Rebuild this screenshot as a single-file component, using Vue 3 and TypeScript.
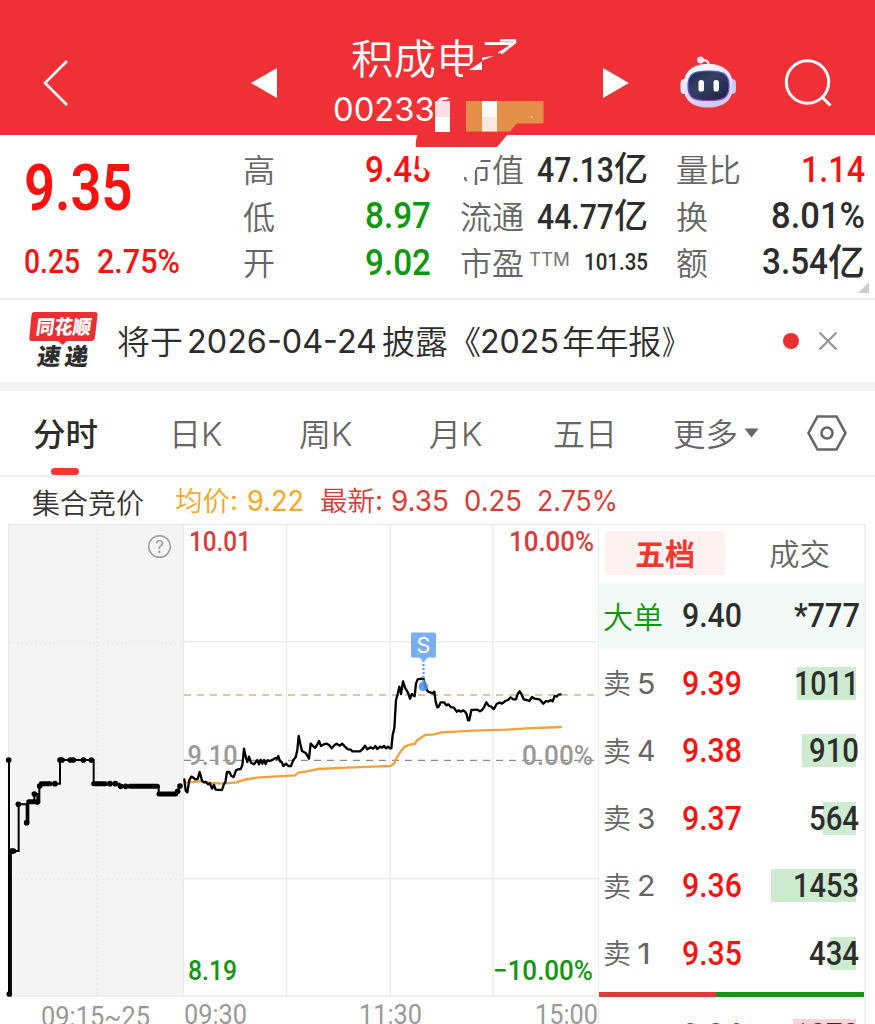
<script setup lang="ts">
import { h, type FunctionalComponent } from 'vue'

interface FitProps {
  t: string
  w: number
  s: number
  k?: 'num' | 'ui' | 'cjk'
  dy?: number
}

// One line of text set to an exact advance width.
const Fit: FunctionalComponent<FitProps> = (p) => {
  const kind = p.k ?? 'num'
  const base = kind === 'cjk' ? 0.885 : 0.86
  return h('svg', { class: ['fit', kind], width: p.w, height: p.s }, [
    h(
      'text',
      {
        x: 0,
        y: p.s * base + (p.dy ?? 0),
        'font-size': p.s,
        textLength: p.w,
        lengthAdjust: 'spacingAndGlyphs',
        fill: 'currentColor',
      },
      p.t,
    ),
  ])
}
Fit.props = ['t', 'w', 's', 'k', 'dy']

const highLow = [
  { label: '高', value: '9.45', cls: 'up' },
  { label: '低', value: '8.97', cls: 'down' },
  { label: '开', value: '9.02', cls: 'down' },
]

const tabs = ['日', '周', '月']

const asks = [
  { n: '5', price: '9.39', vol: '1011', w: 65, bar: 59 },
  { n: '4', price: '9.38', vol: '910', w: 50, bar: 54 },
  { n: '3', price: '9.37', vol: '564', w: 50, bar: 33 },
  { n: '2', price: '9.36', vol: '1453', w: 66, bar: 85 },
  { n: '1', price: '9.35', vol: '434', w: 50, bar: 26 },
]

const priceLine =
  '13,478 17,512 22,517 28,480 34,470 40,473 46,478 53,477 59,456 66,482 72,487 78,486 84,493 90,490 96,506 102,495 107,509 126,510 132,492 136,487 141,456 148,456 154,468 161,471 168,451 174,448 182,447 187,436 192,386 198,414 202,426 207,410 213,428 222,433 232,420 237,433 242,419 247,431 252,420 257,432 262,421 270,423 280,418 287,414 291,416 295,408 300,424 305,426 310,438 318,431 325,438 333,438 340,420 347,412 352,390 356,348 361,372 366,393 378,400 387,416 392,371 399,378 405,384 411,375 417,363 423,378 432,373 440,371 448,376 455,385 464,375 470,371 478,377 487,371 494,379 504,388 512,389 517,394 540,394 548,387 555,377 562,388 572,382 580,386 586,378 592,387 600,380 606,383 612,378 618,385 624,380 630,385 634,385 638,345 643,325 648,240 653,222 658,200 663,222 669,184 675,203 681,213 686,223 690,236 696,222 704,229 708,190 713,178 730,175 736,200 743,214 758,220 763,215 767,245 772,262 776,260 782,247 792,247 799,256 805,253 813,262 821,262 830,275 836,271 842,275 850,271 856,276 860,283 864,301 868,301 874,270 892,269 900,274 906,270 912,262 919,247 927,258 934,260 941,268 950,252 958,248 966,251 976,243 984,240 992,232 1000,238 1008,238 1013,222 1019,214 1025,224 1031,238 1040,240 1048,243 1056,231 1064,236 1078,238 1090,251 1098,243 1105,245 1112,240 1118,244 1124,228 1130,230 1136,224 1142,223'

const averageLine =
  '13,488 60,484 90,489 130,491 170,487 190,480 230,473 290,469 345,466 355,458 380,454 415,447 500,443 600,439 630,438 642,431 652,410 662,395 675,379 690,374 704,372 712,360 722,354 735,345 760,343 785,337 880,332 980,329 1040,325 1143,321'

const auctionDots = [
  [26, 720], [38, 993], [55, 853], [80, 908], [103, 822], [112, 846], [119, 798], [165, 791],
  [180, 720], [186, 720], [211, 720], [220, 720], [250, 720], [274, 720], [330, 791], [346, 791],
  [362, 799], [377, 799], [533, 814], [540, 798], [28, 1422],
]
</script>

<template>
  <div class="page">
    <header class="head">
      <svg class="back" width="30" height="50" viewBox="0 0 30 50">
        <path d="M26 3 4 25 26 47" />
      </svg>
      <svg class="prev" width="26" height="30" viewBox="0 0 26 30"><path d="M0 15 26 0V30Z" /></svg>
      <div class="name">
        <Fit t="积成电子" :w="170" :s="41" k="cjk" />
        <Fit class="code" t="002339" :w="122" :s="32.5" k="ui" />
      </div>
      <svg class="next" width="26" height="30" viewBox="0 0 26 30"><path d="M26 15 0 0V30Z" /></svg>
      <svg class="robot" width="58" height="54" viewBox="0 0 58 54">
        <defs>
          <linearGradient id="shell" x1="0" y1="0" x2="0.4" y2="1">
            <stop offset="0" stop-color="#fff" />
            <stop offset="1" stop-color="#cfcdf2" />
          </linearGradient>
          <linearGradient id="visor" x1="0" y1="0" x2="1" y2="1">
            <stop offset="0" stop-color="#1e2848" />
            <stop offset="0.4" stop-color="#354264" />
            <stop offset="1" stop-color="#18203f" />
          </linearGradient>
          <linearGradient id="rim" x1="0" y1="0" x2="0.5" y2="1">
            <stop offset="0" stop-color="#2f6fb0" />
            <stop offset="0.5" stop-color="#6b46d8" />
            <stop offset="1" stop-color="#8d35e5" />
          </linearGradient>
        </defs>
        <path d="M22 6C27 4 30 6 30 12" fill="none" stroke="#ecdcf0" stroke-width="2.4" />
        <circle cx="21.500" cy="5" r="3.400" fill="#f3e3f3" />
        <rect x="1.500" y="24" width="8" height="15" rx="4" fill="#e9e7fa" />
        <rect x="49" y="24" width="8" height="15" rx="4" fill="#c9c5ee" />
        <path d="M29 9C45 9 54 17 54 31S45 52.500 29 52.500 4.500 45 4.500 31 13 9 29 9Z" fill="url(#shell)" />
        <path d="M29.500 16C43 16 50 18 50 31S43 45.500 29.500 45.500 9 44 9 31 16 16 29.500 16Z" fill="url(#visor)" stroke="url(#rim)" stroke-width="1.200" />
        <rect x="19.500" y="25" width="5.500" height="11.500" rx="2.600" fill="#fff" />
        <rect x="34.500" y="25" width="5.500" height="11.500" rx="2.600" fill="#fff" />
      </svg>
      <svg class="search" width="50" height="50" viewBox="0 0 50 50">
        <circle cx="23.500" cy="23" r="21.200" />
        <path d="M38 38 46.500 46.500" />
      </svg>
      <svg class="smudge" width="240" height="160" viewBox="320 20 240 160">
        <path d="M463 74 467 69 473 61 485 54 499 53.500 517 42 530 48V86H463Z" fill="#ef3137" />
        <path d="M434 111C436 105 440 102 446 100L460 94V126H437Z" fill="#ef3137" />
        <path d="M418 134H508L497 147H416Q415 140 418 134Z" fill="#ef3137" />
        <path d="M469 70 482 61.500V70ZM482 57.500 494 56 482 60.500Z" fill="#fff" />
        <path d="M500 40.500H515V42.500L501 53.500" fill="none" stroke="#fff" stroke-width="2.400" />
        <path d="M435 101H450V117H435Z" fill="#fbdfe4" />
        <path d="M435 117H450V132H435Z" fill="#fff" />
        <path d="M466 101H543.500V123.500H517L510 131.500H466Z" fill="#e38f49" />
        <path d="M482 101H497V117H482Z" fill="#fffafa" />
        <path d="M482 117H497V131.500H482Z" fill="#f8e8dd" />
        <circle cx="531.500" cy="117" r="1" fill="#f5c9a0" />
        <path d="M418.500 150H433V169L429 172 425 168 420 169.500 418.500 166Z" fill="#fff" />
        <path d="M458 150H491V158.500H482L475 170.500V187H458Z" fill="#fff" />
        <rect x="464" y="177" width="2.500" height="3" fill="#777" />
      </svg>
    </header>

    <section class="quote">
      <div class="last up">
        <Fit t="9.35" :w="108.5" :s="64.5" />
        <div class="delta">
          <Fit t="0.25" :w="56" :s="32.5" />
          <Fit t="2.75%" :w="83" :s="32.5" />
        </div>
      </div>
      <div class="col">
        <div v-for="r in highLow" :key="r.label" class="row">
          <Fit class="lab" :t="r.label" :w="32" :s="32" k="cjk" :dy="2" />
          <Fit :class="r.cls" :t="r.value" :w="66" :s="37.5" />
        </div>
      </div>
      <div class="col mid">
        <div class="row">
          <Fit class="lab" t="市值" :w="64" :s="32" k="cjk" :dy="2" />
          <span class="pair"><Fit t="47.13" :w="77" :s="34.5" :dy="1.5" /><Fit class="yi" t="亿" :w="34" :s="34" k="cjk" /></span>
        </div>
        <div class="row">
          <Fit class="lab" t="流通" :w="64" :s="32" k="cjk" :dy="2" />
          <span class="pair"><Fit t="44.77" :w="77" :s="34.5" :dy="1.5" /><Fit class="yi" t="亿" :w="34" :s="34" k="cjk" /></span>
        </div>
        <div class="row">
          <Fit class="lab" t="市盈" :w="64" :s="32" k="cjk" :dy="2" />
          <Fit class="ttm" t="TTM" :w="41" :s="18.5" k="ui" :dy="-1.500" />
          <Fit class="pe" t="101.35" :w="64" :s="23" />
        </div>
      </div>
      <div class="col right">
        <div class="row">
          <Fit class="lab" t="量比" :w="65" :s="32" k="cjk" :dy="2" />
          <Fit class="up" t="1.14" :w="64" :s="37.5" />
        </div>
        <div class="row">
          <Fit class="lab" t="换" :w="32" :s="32" k="cjk" :dy="2" />
          <Fit t="8.01%" :w="94" :s="37" />
        </div>
        <div class="row">
          <Fit class="lab" t="额" :w="32" :s="32" k="cjk" :dy="2" />
          <span class="pair"><Fit t="3.54" :w="66" :s="36" /><Fit class="yi" t="亿" :w="37" :s="37" k="cjk" /></span>
        </div>
      </div>
      <svg class="corner" width="11" height="11" viewBox="0 0 11 11"><path d="M11 0V11H0Z" /></svg>
    </section>

    <section class="notice">
      <svg class="logo" width="70" height="60" viewBox="0 0 70 60">
        <path d="M5 1H66Q69 1 68.500 4L66 26Q65.500 30 62 30H38L33.500 34 29 30H2.500Q0 30 0.300 27L2.500 4Q3 1 5 1Z" fill="#ea2f33" />
        <g transform="skewX(-8)">
          <text x="9.500" y="23" font-size="19.500" textLength="55" lengthAdjust="spacingAndGlyphs" fill="#fff">同花顺</text>
          <text x="15" y="54.500" font-size="23.500" textLength="51" lengthAdjust="spacing" fill="#2d2d2d">速递</text>
        </g>
      </svg>
      <Fit class="n1" t="将于" :w="66" :s="32.5" k="cjk" />
      <Fit class="n2" t="2026-04-24" :w="190" :s="32.5" k="ui" />
      <Fit class="n3" t="披露《" :w="99" :s="32.5" k="cjk" />
      <Fit class="n4" t="2025" :w="79" :s="32.5" k="ui" />
      <Fit class="n5" t="年年报" :w="99.5" :s="32.5" k="cjk" />
      <Fit t="》" :w="26" :s="32.5" k="cjk" />
      <i class="dot"></i>
      <svg class="close" width="20" height="20" viewBox="0 0 20 20"><path d="M1.500 1.500 18.500 18.500M18.500 1.500 1.500 18.500" /></svg>
    </section>

    <nav class="tabs">
      <div class="tab on"><Fit t="分时" :w="65" :s="32" k="cjk" :dy="1" /></div>
      <div v-for="t in tabs" :key="t" class="tab tk">
        <Fit :t="t" :w="32" :s="32" k="cjk" :dy="1" />
        <Fit t="K" :w="21.5" :s="32" k="ui" :dy="1" />
      </div>
      <div class="tab t5"><Fit t="五日" :w="64" :s="32" k="cjk" :dy="1" /></div>
      <div class="tab more">
        <Fit t="更多" :w="65" :s="32" k="cjk" :dy="1" />
        <svg width="15" height="10" viewBox="0 0 15 10"><path d="M.5 .5H14.500L7.500 9.500Z" fill="#666" /></svg>
      </div>
      <svg class="hex" width="42" height="38" viewBox="0 0 42 38">
        <path d="M11.500 2.500H30.500L39.500 19 30.500 35.500H11.500L2.500 19Z" />
        <circle cx="21" cy="19" r="5.500" />
      </svg>
    </nav>

    <div class="info">
      <Fit class="i1" t="集合竞价" :w="112" :s="28" k="cjk" :dy="2" />
      <span class="avg"><Fit t="均价" :w="55" :s="27.5" k="cjk" /><Fit t=":" :w="8" :s="27" k="ui" /><Fit class="g" t="9.22" :w="57" :s="28" k="ui" /></span>
      <span class="new"><Fit t="最新" :w="55" :s="27.5" k="cjk" /><Fit t=":" :w="8" :s="27" k="ui" /><Fit class="g" t="9.35" :w="58" :s="28" k="ui" /><Fit class="g2" t="0.25" :w="58" :s="28" k="ui" /><Fit class="g2" t="2.75%" :w="81" :s="28" k="ui" /></span>
    </div>

    <main class="body">
      <svg class="chart" width="598" height="500" viewBox="0 524 598 500">
        <rect x="8" y="524" width="175.500" height="472" fill="#f4f4f4" />
        <g fill="none" stroke="#e9e9e9" stroke-width="1.300">
          <path d="M8 524.700H598M8 996H598M8.500 524V996M183.500 524V996M286.500 524V996M390 524V996M493 524V996M184 641.700H598M184 878.500H598" />
          <path d="M97 524V996M8 643H183M8 879.500H183" stroke-dasharray="2 2.500" />
        </g>
        <path d="M184 695H598" stroke="#d3b684" stroke-width="1.400" stroke-dasharray="7 6" />
        <path d="M184 760.300H598" stroke="#8a8a8a" stroke-width="1.300" stroke-dasharray="7 6" />
        <g class="num" font-size="28">
          <text x="189" y="551" textLength="62" lengthAdjust="spacingAndGlyphs" fill="#de3a3a">10.01</text>
          <text x="509" y="551" textLength="85" lengthAdjust="spacingAndGlyphs" fill="#de3a3a">10.00%</text>
          <text x="187.500" y="765" textLength="50" lengthAdjust="spacingAndGlyphs" fill="#999">9.10</text>
          <text x="522" y="765" textLength="71" lengthAdjust="spacingAndGlyphs" fill="#999">0.00%</text>
          <text x="188" y="980" textLength="49" lengthAdjust="spacingAndGlyphs" fill="#159415">8.19</text>
          <text x="493" y="980" textLength="100" lengthAdjust="spacingAndGlyphs" fill="#159415">−10.00%</text>
          <g class="times" fill="#999">
            <text x="41" y="1026" textLength="109" lengthAdjust="spacingAndGlyphs">09:15~25</text>
            <text x="184" y="1024" textLength="63" lengthAdjust="spacingAndGlyphs">09:30</text>
            <text x="359" y="1024" textLength="63" lengthAdjust="spacingAndGlyphs">11:30</text>
            <text x="535" y="1024" textLength="63" lengthAdjust="spacingAndGlyphs">15:00</text>
          </g>
        </g>
        <circle cx="159.500" cy="546.500" r="10.800" fill="none" stroke="#999" stroke-width="1.400" />
        <text class="help" x="159.500" y="553" font-size="17" text-anchor="middle" fill="#999">?</text>

        <g transform="translate(0 520) scale(.33333)">
          <path d="M27 720V1425M32 1422V993H56V853H80V908M85 908V845H103V822H112V846H118V798L124 791H180V720H281V791H358V798H476V822H528L540 798" fill="none" stroke="#000" stroke-width="6" />
          <path d="M30 1420V996" stroke="#000" stroke-width="10" />
          <path d="M82 904V850" stroke="#000" stroke-width="8" />
          <path d="M32 993H42M86 845H104M124 791H150M281 791H316M390 798.500H472M477 822H527" fill="none" stroke="#000" stroke-width="15" stroke-linecap="round" />
          <circle v-for="(d, i) in auctionDots" :key="i" :cx="d[0]" :cy="d[1]" r="8.500" />
        </g>
        <g transform="translate(180 620) scale(.33333)" fill="none" stroke-linejoin="round" stroke-linecap="round">
          <polyline :points="averageLine" stroke="#f2a23a" stroke-width="7" />
          <polyline :points="priceLine" stroke="#000" stroke-width="7" />
        </g>
        <path d="M423.500 660V686" stroke="#5b9bea" stroke-width="2.200" stroke-dasharray="2 2" />
        <circle cx="423.300" cy="686.500" r="4.700" fill="#4a8fec" opacity=".88" />
        <path d="M412.500 632.500H434Q436 632.500 436 634.500V656Q436 657.500 434 657.500H428L423.500 661.500 419 657.500H413Q411 657.500 411 656V634.500Q411 632.500 412.500 632.500Z" fill="#7baef0" />
        <text class="sell" x="423.500" y="653" font-size="21.500" text-anchor="middle" fill="#fff">S</text>
      </svg>

      <aside class="book">
        <div class="modes">
          <div class="mode sel"><Fit t="五档" :w="60" :s="30" k="cjk" /></div>
          <div class="mode"><Fit t="成交" :w="61" :s="30" k="cjk" /></div>
        </div>
        <div class="big">
          <Fit class="bl" t="大单" :w="60" :s="30" k="cjk" />
          <Fit class="bp" t="9.40" :w="60" :s="33" />
          <Fit class="bv" t="*777" :w="66" :s="33" />
        </div>
        <div v-for="a in asks" :key="a.n" class="lvl">
          <Fit class="sl" t="卖" :w="28" :s="28" k="cjk" />
          <Fit class="sn" :t="a.n" :w="a.n === '1' ? 14 : 18.5" :s="29" k="ui" />
          <Fit class="sp" :class="{ one: a.n === '1' }" :t="a.price" :w="60" :s="33" />
          <div class="vol">
            <i class="bar" :style="{ width: a.bar + 'px' }"></i>
            <Fit :t="a.vol" :w="a.w" :s="33" />
          </div>
        </div>
        <div class="ratio"><i></i><b></b></div>
        <div class="lvl buy">
          <Fit class="sl" t="买" :w="28" :s="28" k="cjk" />
          <Fit class="sn" t="1" :w="14" :s="29" k="ui" />
          <Fit class="sp one" t="9.34" :w="60" :s="33" />
          <div class="vol">
            <i class="bar pink"></i>
            <Fit t="1070" :w="66" :s="33" />
          </div>
        </div>
      </aside>
    </main>
  </div>
</template>

<style>
html,
body {
  margin: 0;
  background: #fff;
}
</style>

<style scoped>
.page {
  position: relative;
  z-index: 0;
  width: 875px;
  height: 1024px;
  overflow: hidden;
  background: #fff;
  color: #2d2d2d;
  font-family: Inter, 'Noto Sans CJK SC', sans-serif;
}
.page svg {
  display: block;
  flex: none;
}
.fit {
  overflow: visible;
}
.num {
  font-family: Roboto, 'Noto Sans CJK SC', sans-serif;
  font-weight: 500;
}
.ui {
  font-family: Inter, 'Noto Sans CJK SC', sans-serif;
  font-weight: 400;
}
.cjk {
  font-family: 'Noto Sans CJK SC', sans-serif;
  font-weight: 350;
}
.up {
  color: #fb120f;
}
.down {
  color: #0f970f;
}

/* header */
.head {
  position: relative;
  display: flex;
  align-items: flex-start;
  box-sizing: border-box;
  height: 135px;
  background: #ef3137;
  color: #fff;
}
.back {
  margin: 58px 0 0 41px;
  fill: none;
  stroke: #fff;
  stroke-width: 2.6;
}
.prev {
  margin: 67.5px 0 0 180px;
  fill: #fff;
}
.name {
  width: 252px;
  margin: 38px 0 0 74px;
}
.code {
  margin: 14px 0 0 -18px;
}
.next {
  margin: 67.5px 0 0 0;
  fill: #fff;
}
.robot {
  margin: 55px 0 0 50px;
}
.search {
  margin: 59px 0 0 47px;
  fill: none;
  stroke: #fff;
  stroke-width: 3;
}
.smudge {
  position: absolute;
  left: 320px;
  top: 20px;
}

/* quote */
.quote {
  position: relative;
  z-index: -1;
  display: flex;
  box-sizing: border-box;
  height: 165px;
  padding-left: 24px;
  border-bottom: 2px solid #eee;
}
.last {
  width: 219px;
  padding-top: 20px;
}
.delta {
  display: flex;
  gap: 17px;
  margin-top: 25.5px;
}
.last .num {
  font-weight: 600;
}
.delta .num {
  font-weight: 500;
}
.col {
  width: 188px;
  padding-top: 10px;
}
.col.mid {
  width: 188px;
  margin-left: 29px;
}
.col.right {
  width: 189px;
  margin-left: 28px;
}
.row {
  display: flex;
  align-items: center;
  justify-content: space-between;
  height: 46.6px;
}
.pair {
  display: flex;
  align-items: center;
}
.lab {
  color: #666;
}
.yi {
  font-weight: 500;
}
.ttm {
  margin-left: -9px;
  color: #777;
}
.corner {
  position: absolute;
  right: 6px;
  bottom: 5px;
  fill: #ccc;
}

/* notice */
.notice {
  display: flex;
  align-items: center;
  height: 82px;
  border-bottom: 9px solid #f4f4f4;
}
.logo {
  margin-left: 29px;
  font-family: 'Noto Sans CJK SC', sans-serif;
  font-weight: 900;
}
.n1 {
  margin-left: 18px;
}
.n2 {
  margin-left: 4px;
}
.n3 {
  margin-left: 5px;
}
.n4 {
  margin-left: -1px;
}
.n5 {
  margin-left: 3px;
}
.dot {
  width: 16px;
  height: 16px;
  margin-left: 95.5px;
  border-radius: 50%;
  background: #ea2f33;
}
.close {
  margin-left: 18.5px;
  fill: none;
  stroke: #999;
  stroke-width: 2.4;
}

/* period tabs */
.tabs {
  display: flex;
  align-items: center;
  box-sizing: border-box;
  height: 86px;
  border-bottom: 2px solid #ededed;
  color: #666;
}
.tab {
  display: flex;
  align-items: center;
}
.tab .ui {
  font-weight: 300;
}
.tab.on {
  position: relative;
  margin-left: 33px;
  color: #2d2d2d;
}
.tab.on .fit {
  font-weight: 500;
}
.tab.on::after {
  content: '';
  position: absolute;
  left: 18px;
  top: 51px;
  width: 28px;
  height: 6.500px;
  border-radius: 4px;
  background: #f5372f;
}
.tk {
  margin-left: 76.5px;
}
.on + .tk {
  margin-left: 71px;
}
.t5 {
  margin-left: 70px;
}
.more {
  margin-left: 56px;
  gap: 6px;
}
.hex {
  margin-left: 47.5px;
  fill: none;
  stroke: #666;
  stroke-width: 2.6;
}

/* quote line above chart */
.info {
  display: flex;
  align-items: center;
  height: 47px;
}
.i1 {
  margin-left: 32px;
  color: #333;
}
.avg,
.new {
  display: flex;
  align-items: center;
}
.avg {
  margin-left: 31px;
  color: #f5a623;
}
.new {
  margin-left: 16px;
  color: #dc3a37;
}
.g {
  margin-left: 8.5px;
}
.g2 {
  margin-left: 15px;
}

/* chart and order book */
.body {
  display: flex;
}
.times {
  font-weight: 400;
}
.help {
  font-family: Inter, sans-serif;
}
.sell {
  font-family: Inter, sans-serif;
}
.book {
  box-sizing: border-box;
  width: 268px;
  height: 500px;
  overflow: hidden;
  border-top: 1px solid #e9e9e9;
  border-right: 2px solid #eee;
  border-left: 1px solid #eee;
}
.modes {
  display: flex;
  box-sizing: border-box;
  height: 57px;
  padding: 6px 5px 7px 6px;
  gap: 14px;
}
.mode {
  display: flex;
  align-items: center;
  justify-content: center;
  width: 120px;
  border-radius: 4px;
  color: #666;
}
.mode.sel {
  background: #fef1f2;
  color: #f5372f;
}
.mode.sel .fit {
  font-weight: 700;
}
.big,
.lvl {
  display: flex;
  align-items: center;
  height: 67.500px;
}
.big {
  background: #f3f9f6;
}
.bl {
  margin-left: 4px;
  color: #0f970f;
}
.bp {
  margin-left: 19px;
}
.bv {
  margin-left: 52px;
}
.sl {
  margin-left: 4px;
  color: #666;
}
.sn {
  margin-left: 6px;
  color: #666;
}
.sp {
  margin-left: 26.5px;
  color: #fb120f;
}
.sp.one {
  margin-left: 31px;
}
.vol {
  position: relative;
  display: flex;
  flex: 1;
  align-items: center;
  justify-content: flex-end;
  height: 33px;
  padding-right: 5px;
}
.bar {
  position: absolute;
  top: 0;
  right: 8px;
  height: 33px;
  background: #cdebcf;
}
.bar.pink {
  width: 63px;
  background: #fbd3d5;
}
.vol .fit {
  position: relative;
}
.ratio {
  display: flex;
  height: 4.500px;
  margin-top: 5px;
}
.ratio i {
  width: 117px;
  background: #dc3c3c;
}
.ratio b {
  flex: 1;
  background: #1a8f1a;
}
.buy {
  margin-top: 5.500px;
}
</style>
